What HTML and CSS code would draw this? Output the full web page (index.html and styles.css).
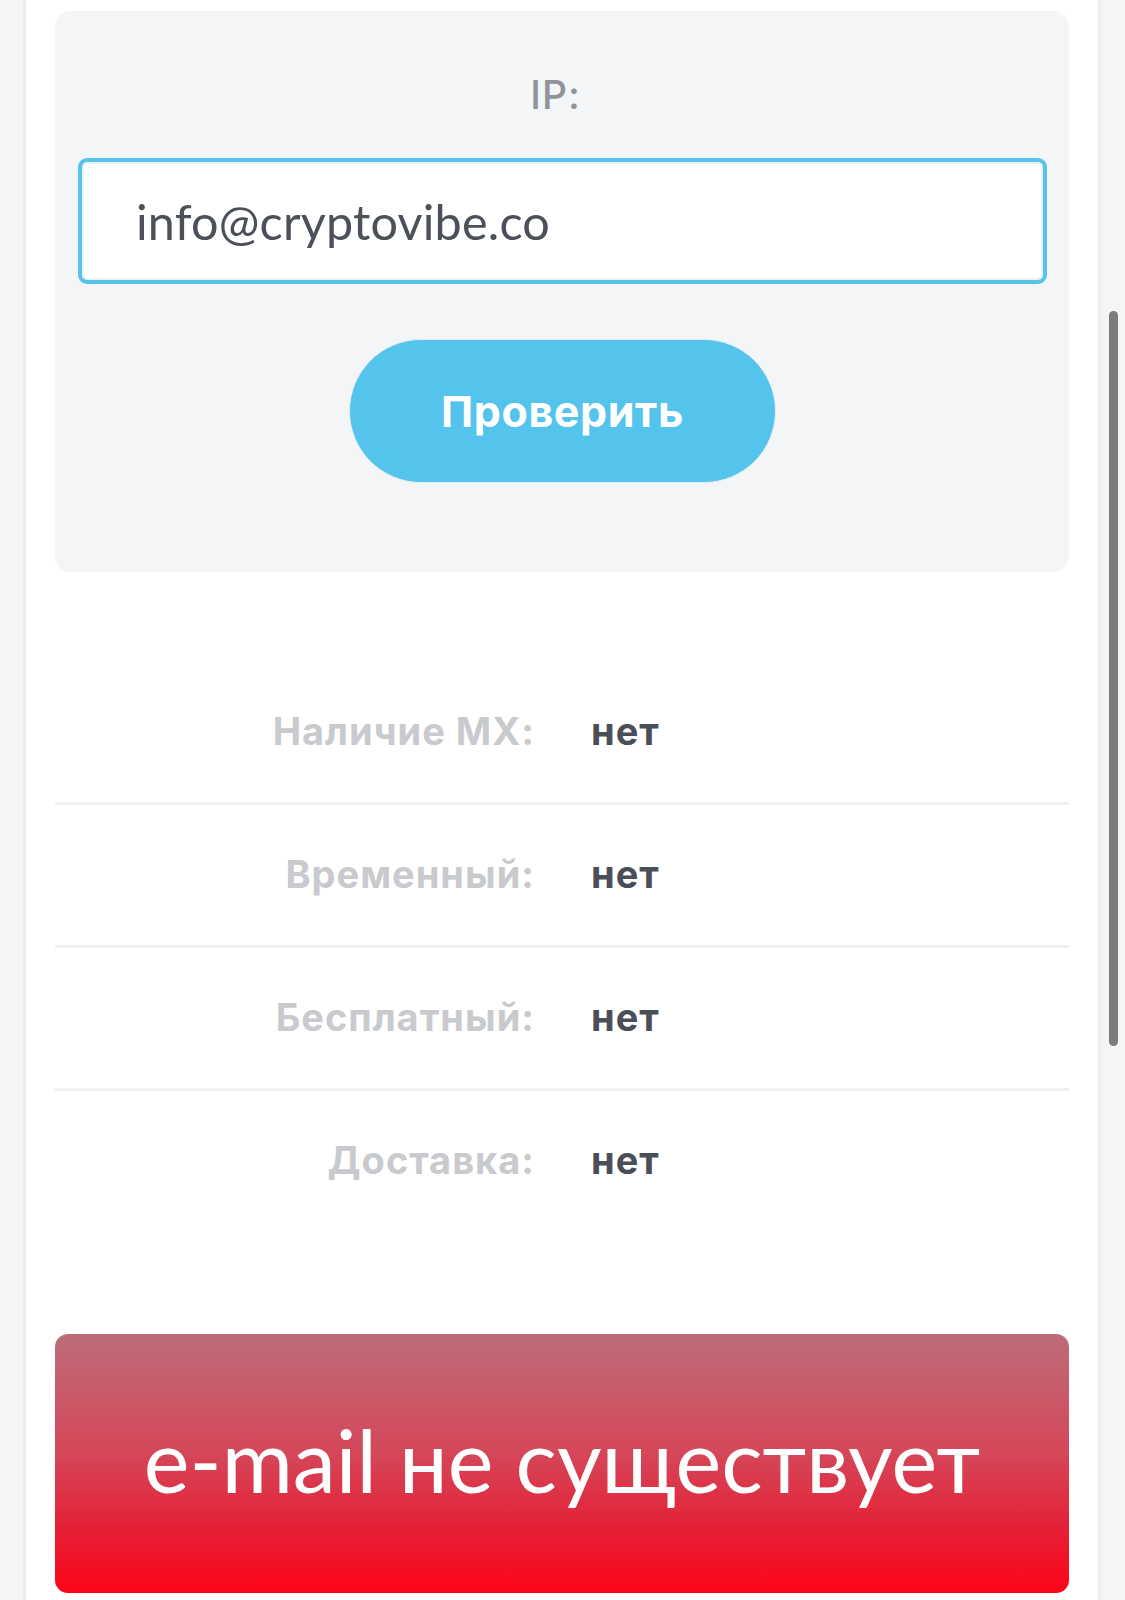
FILE: index.html
```html
<!DOCTYPE html>
<html lang="ru">
<head>
<meta charset="utf-8">
<title>Проверка e-mail</title>
<link rel="stylesheet" href="styles.css">
</head>
<body>
<main class="card">
  <section class="form-panel">
    <label class="ip-label" for="email">IP:</label>
    <input class="email-input" id="email" type="text" value="info@cryptovibe.co">
    <button class="check-btn" type="button">Проверить</button>
  </section>

  <dl class="results">
    <div class="result-row">
      <dt class="result-label">Наличие MX:</dt>
      <dd class="result-value">нет</dd>
    </div>
    <div class="result-row">
      <dt class="result-label">Временный:</dt>
      <dd class="result-value">нет</dd>
    </div>
    <div class="result-row">
      <dt class="result-label">Бесплатный:</dt>
      <dd class="result-value">нет</dd>
    </div>
    <div class="result-row">
      <dt class="result-label">Доставка:</dt>
      <dd class="result-value">нет</dd>
    </div>
  </dl>

  <div class="verdict">e-mail не существует</div>
</main>
<div class="scrollbar"><div class="scrollbar-thumb"></div></div>
</body>
</html>
```
FILE: styles.css
```css
html, body {
  margin: 0;
  padding: 0;
}

body {
  background: #f4f5f7;
  height: 1600px;
  overflow: hidden;
  font-family: "Inter", "Noto Sans", sans-serif;
}

.card {
  display: block;
  margin-left: 23px;
  width: 1078px;
  min-height: 1600px;
  box-sizing: border-box;
  background: #ffffff;
  border-left: 3px solid #eceef1;
  border-right: 3px solid #eceef1;
  padding: 11px 29px 0;
}

.form-panel {
  background: #f4f5f7;
  border-radius: 16px;
  padding: 61px 22px 89px 23px;
  display: flex;
  flex-direction: column;
  align-items: center;
}

.ip-label {
  font-family: "Inter", "Noto Sans", sans-serif;
  font-weight: 500;
  font-size: 39px;
  line-height: 45px;
  letter-spacing: 1px;
  color: #909398;
  margin-left: -14px;
}

.email-input {
  margin-top: 41px;
  width: 100%;
  height: 126px;
  box-sizing: border-box;
  border: 4px solid #55c3ea;
  border-radius: 9px;
  background: #ffffff;
  box-shadow: inset 0 0 0 2px #eef1f4;
  padding: 0 0 0 54px;
  font-family: "Lato", "Open Sans", sans-serif;
  font-size: 48.5px;
  letter-spacing: 0.2px;
  color: #4b5059;
  outline: none;
}

.check-btn {
  margin-top: 55px;
  width: 427px;
  height: 144px;
  border: 1px solid #e3eef4;
  border-radius: 72px;
  background: #55c4ec;
  color: #ffffff;
  font-family: "Inter", "Noto Sans", sans-serif;
  font-weight: 700;
  font-size: 43px;
  letter-spacing: 0.6px;
  padding: 0;
}

.results {
  margin: 90px 0 0;
  padding: 0;
}

.result-row {
  display: grid;
  grid-template-columns: 1fr 1fr;
  align-items: center;
  height: 140px;
  border-bottom: 3px solid #eef0f2;
}

.result-row:last-child {
  border-bottom: none;
}

.result-label,
.result-value {
  margin: 0;
  font-family: "Inter", "Noto Sans", sans-serif;
  font-weight: 700;
  font-size: 38px;
  line-height: 44px;
  letter-spacing: 1px;
  padding-bottom: 3px;
}

.result-label {
  text-align: right;
  padding-right: 27px;
  color: #c8cacd;
}

.result-value {
  padding-left: 29px;
  color: #4a4f57;
}

.verdict {
  margin-top: 103px;
  height: 259px;
  border-radius: 13px;
  background: linear-gradient(180deg, #bd6c79 0%, #d4485a 45%, #e52036 75%, #fe0419 100%);
  display: flex;
  align-items: center;
  justify-content: center;
  color: #ffffff;
  font-family: "Lato", "Open Sans", sans-serif;
  font-size: 86.5px;
  padding-bottom: 8px;
  box-sizing: border-box;
}

.scrollbar {
  position: fixed;
  top: 0;
  right: 0;
  width: 24px;
  height: 1600px;
}

.scrollbar-thumb {
  position: absolute;
  left: 8px;
  top: 311px;
  width: 9px;
  height: 735px;
  border-radius: 5px;
  background: #7b7c7e;
}
```
